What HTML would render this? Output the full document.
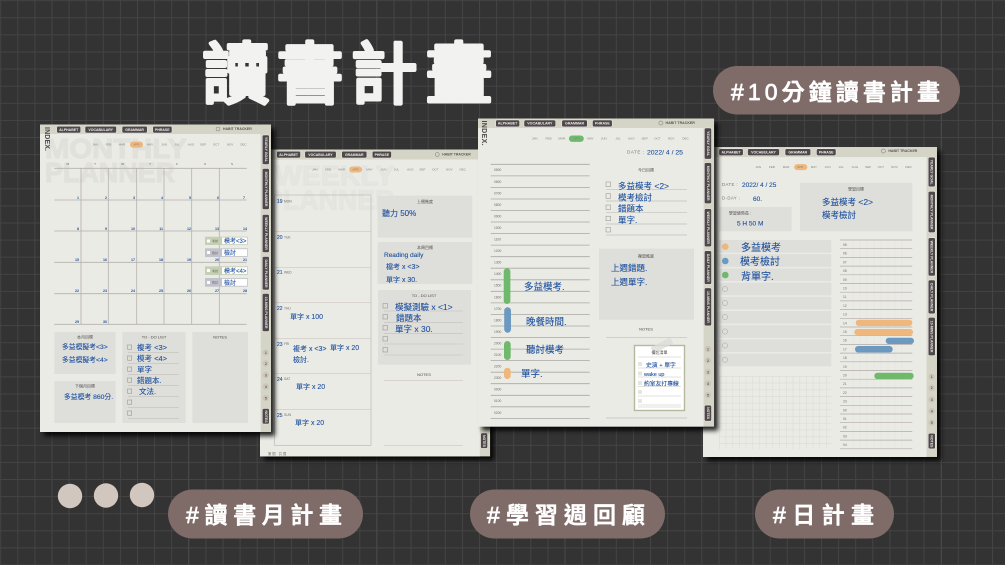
<!DOCTYPE html>
<html lang="zh-Hant"><head><meta charset="utf-8"><title>讀書計畫</title>
<style>
html,body{margin:0;padding:0;background:#333}
svg{display:block}
text{font-family:"Liberation Sans","Noto Sans CJK TC",sans-serif}
.w{fill:#f2efed;font-size:3.5px;font-weight:700;text-anchor:middle}
.m{fill:#85847f;font-size:3px;text-anchor:middle}
.h{fill:#1c4f9e;stroke:#1c4f9e;stroke-width:.1px;font-family:"Liberation Sans","Noto Sans CJK TC",sans-serif;font-size:8.5px}
.t{fill:#4e4b48;font-size:4px;text-anchor:middle}
.l{fill:#6e6c66;font-size:3.3px}
.d{fill:#1c4f9e;font-size:3.6px;font-weight:700;text-anchor:end}
.tag{fill:#fff;font-size:23px;font-weight:500;font-family:"Liberation Sans","Noto Sans CJK TC",sans-serif;stroke:#fff;stroke-width:.7px;stroke-linejoin:round}
.tt{fill:#f2f3f1;stroke:#f2f3f1;stroke-width:4px;stroke-linejoin:round;stroke-linecap:round;font-size:67px;font-weight:400;text-anchor:middle}
.g{fill:#e1e1dc;stroke:#e1e1dc;stroke-width:1.2px;font-size:28px;font-weight:700}
.tb{fill:#4e484a;stroke:#f0eeea;stroke-width:.5}
.c{fill:#ccc5bb}
</style></head><body>
<svg xmlns="http://www.w3.org/2000/svg" width="1005" height="565" viewBox="0 0 1005 565">
<defs>
<pattern id="bg" width="17.1" height="17.1" patternUnits="userSpaceOnUse" x=".2" y=".2"><path d="M.5 0V17.1M0 .5H17.1" stroke="#444" fill="none"/></pattern>
<pattern id="g4" width="6.7" height="6.7" patternUnits="userSpaceOnUse" x="719" y="376"><path d="M.25 0V6.7M0 .25H6.7" stroke="#dcdcd6" stroke-width=".6" fill="none"/></pattern>
<filter id="sh" x="-10%" y="-10%" width="125%" height="125%" color-interpolation-filters="sRGB"><feGaussianBlur in="SourceAlpha" stdDeviation="2.5" result="b"/><feOffset in="b" dx="4" dy="4" result="o"/><feComponentTransfer in="o" result="o2"><feFuncA type="linear" slope=".85"/></feComponentTransfer><feGaussianBlur in="SourceGraphic" stdDeviation=".3" result="s"/><feMerge><feMergeNode in="o2"/><feMergeNode in="s"/></feMerge></filter>
</defs>
<rect width="1005" height="565" fill="#333"/>
<rect width="1005" height="565" fill="url(#bg)"/>
<path d="M188.500 0V565M376.700 0V565M565 0V565M753 0V565M941.500 0V565" stroke="#484848"/>

<text class="tt" x="236" y="98">讀</text>
<text class="tt" x="310" y="98">書</text>
<text class="tt" x="384" y="98">計</text>
<text class="tt" x="459" y="98">畫</text>

<rect x="713" y="66" width="247" height="48.500" rx="24" fill="#7f6c69"/>
<text class="tag" x="731" y="100" textLength="209">#10分鐘讀書計畫</text>
<rect x="168" y="489.500" width="195" height="49" rx="24.500" fill="#7f6c69"/>
<text class="tag" x="186" y="523" textLength="156">#讀書月計畫</text>
<rect x="470" y="489.500" width="195" height="49" rx="24.500" fill="#7f6c69"/>
<text class="tag" x="487" y="523" textLength="158">#學習週回顧</text>
<rect x="755" y="489.500" width="139" height="49" rx="24.500" fill="#7f6c69"/>
<text class="tag" x="773" y="523" textLength="101">#日計畫</text>
<circle cx="70" cy="496" r="12.200" fill="#d2c7bf"/><circle cx="106" cy="495.500" r="12.200" fill="#d2c7bf"/><circle cx="142" cy="495" r="12.200" fill="#d2c7bf"/>

<!-- PAGE 2 -->
<g filter="url(#sh)">
<g transform="translate(260 149.500) scale(.996 .998)">
<rect width="231" height="307.500" fill="#d5d5c7"/><rect y="10" width="220.700" height="297.500" fill="#ebebe6"/>
<rect class="tb" x="16.700" y="1.700" width="24" height="6.800" rx="1.500"/><text class="w" x="28.700" y="6.300">ALPHABET</text>
<rect class="tb" x="45" y="1.700" width="31.500" height="6.800" rx="1.500"/><text class="w" x="60.700" y="6.300">VOCABULARY</text>
<rect class="tb" x="82" y="1.700" width="25.300" height="6.800" rx="1.500"/><text class="w" x="94.600" y="6.300">GRAMMAR</text>
<rect class="tb" x="112.700" y="1.700" width="19.300" height="6.800" rx="1.500"/><text class="w" x="122.300" y="6.300">PHRASE</text>
<circle cx="178" cy="5" r="2" fill="none" stroke="#777" stroke-width=".5"/><text x="183" y="6.200" font-size="3.500" font-weight="700" fill="#5a5550">HABIT TRACKER</text>
<text class="g" x="15" y="35.500" textLength="120" lengthAdjust="spacingAndGlyphs" fill-opacity=".45" stroke-opacity=".45">WEEKLY</text>
<text class="g" x="5" y="60" textLength="130" lengthAdjust="spacingAndGlyphs" fill-opacity=".45" stroke-opacity=".45">PLANNER</text>
<rect x="89.500" y="17" width="13" height="6" rx="3" fill="#efb77c"/>
<text class="m" x="55" y="21">JAN</text><text class="m" x="68.500" y="21">FEB</text><text class="m" x="82" y="21">MAR</text><text class="m" x="96" y="21">APR</text><text class="m" x="110" y="21">MAY</text><text class="m" x="124" y="21">JUN</text><text class="m" x="137" y="21">JUL</text><text class="m" x="151" y="21">AUG</text><text class="m" x="163" y="21">SEP</text><text class="m" x="176" y="21">OCT</text><text class="m" x="190" y="21">NOV</text><text class="m" x="203.500" y="21">DEC</text>
<rect class="tb" x="221.500" y="284" width="7" height="15.500" rx="1.500"/><text class="w" transform="translate(224 292) rotate(90)">NOTES</text>
</g>
<rect x="274.300" y="195" width="96.700" height="250.300" fill="none" stroke="#bdb9b3" stroke-width=".7"/>
<path d="M274 231.300H371M274 267.300H371M274 302.300H371M274 338.300H371M274 373.300H371M274 409.300H371" stroke="#cfc5c3" stroke-width=".7"/>
<text class="l" x="284" y="202.500">MON</text><text class="l" x="284" y="238.500">TUE</text><text class="l" x="284" y="273.500">WED</text><text class="l" x="284" y="309.500">THU</text><text class="l" x="284" y="345">FRI</text><text class="l" x="284" y="380">SAT</text><text class="l" x="284" y="416">SUN</text>
<text class="h" style="font-size:5px" x="277" y="203">19</text><text class="h" style="font-size:5px" x="277" y="239">20</text><text class="h" style="font-size:5px" x="277" y="274">21</text><text class="h" style="font-size:5px" x="277" y="310">22</text><text class="h" style="font-size:5px" x="277" y="346">23</text><text class="h" style="font-size:5px" x="277" y="381">24</text><text class="h" style="font-size:5px" x="277" y="417">25</text>
<text class="h" style="font-size:7px" x="290" y="319">單字 x 100</text>
<text class="h" style="font-size:7px" x="293" y="351">複考 x &lt;3&gt;</text><text class="h" style="font-size:7px" x="330" y="350">單字 x 20</text><text class="h" style="font-size:7px" x="293" y="362">檢討.</text>
<text class="h" style="font-size:7px" x="296" y="389">單字 x 20</text><text class="h" style="font-size:7px" x="295" y="425">單字 x 20</text>
<rect x="377.700" y="195.700" width="94.600" height="42" fill="#dededa"/><text class="t" x="425" y="203">上週進度</text>
<text class="h" style="font-size:8px" x="382" y="216">聽力 50%</text>
<rect x="377.700" y="242" width="94.600" height="42" fill="#dededa"/><text class="t" x="425" y="249">本周目標</text>
<text class="h" style="font-size:6.500px" x="384" y="257">Reading daily</text><text class="h" style="font-size:7px" x="386" y="269">檔考 x &lt;3&gt;</text><text class="h" style="font-size:7px" x="386" y="282">單字 x 30.</text>
<rect x="378" y="290" width="93" height="74.700" fill="#dededa"/><text class="t" x="424" y="297">TO - DO LIST</text>
<path d="M384 311H463M384 322.300H463M384 333.300H463M384 344H463M384 355H463" stroke="#c4c0ba" stroke-width=".6"/>
<g fill="none" stroke="#8d8b85" stroke-width=".5"><rect x="383" y="303.500" width="4.500" height="4.500"/><rect x="383" y="314.500" width="4.500" height="4.500"/><rect x="383" y="325.500" width="4.500" height="4.500"/><rect x="383" y="336.500" width="4.500" height="4.500"/><rect x="383" y="347.500" width="4.500" height="4.500"/></g>
<text class="h" style="font-size:8.500px" x="395" y="310">模擬測驗 x &lt;1&gt;</text><text class="h" style="font-size:8.500px" x="396" y="321">錯題本</text><text class="h" style="font-size:8.500px" x="395" y="332">單字 x 30.</text>
<text class="t" x="424" y="376">NOTES</text>
<path d="M384 380.300H463M384 445.300H463" stroke="#cfc5c3" stroke-width=".7"/>
<text class="l" x="268" y="455">第 週　共 週</text>
</g>

<!-- PAGE 4 -->
<g filter="url(#sh)">
<g transform="translate(703 147) scale(1.013 1.008)">
<rect width="231" height="307.500" fill="#d5d5c7"/><rect y="10" width="220.700" height="297.500" fill="#ebebe6"/>
<rect class="tb" x="15.700" y="1.700" width="24" height="6.800" rx="1.500"/><text class="w" x="27.700" y="6.300">ALPHABET</text>
<rect class="tb" x="44" y="1.700" width="31.500" height="6.800" rx="1.500"/><text class="w" x="59.700" y="6.300">VOCABULARY</text>
<rect class="tb" x="81" y="1.700" width="25.300" height="6.800" rx="1.500"/><text class="w" x="93.600" y="6.300">GRAMMAR</text>
<rect class="tb" x="112" y="1.700" width="19.300" height="6.800" rx="1.500"/><text class="w" x="121.600" y="6.300">PHRASE</text>
<circle cx="178" cy="4" r="2" fill="none" stroke="#777" stroke-width=".5"/><text x="183" y="5.200" font-size="3.500" font-weight="700" fill="#5a5550">HABIT TRACKER</text>
<rect x="90" y="17" width="13" height="6" rx="3" fill="#efb77c"/>
<text class="m" x="54.500" y="21">JAN</text><text class="m" x="68" y="21">FEB</text><text class="m" x="82" y="21">MAR</text><text class="m" x="96" y="21">APR</text><text class="m" x="109.500" y="21">MAY</text><text class="m" x="123" y="21">JUN</text><text class="m" x="136.500" y="21">JUL</text><text class="m" x="150" y="21">AUG</text><text class="m" x="163" y="21">SEP</text><text class="m" x="175.500" y="21">OCT</text><text class="m" x="189" y="21">NOV</text><text class="m" x="203" y="21">DEC</text>
<rect class="tb" x="222.300" y="10" width="7" height="29.500" rx="1.500"/><text class="w" transform="translate(224.800 25) rotate(90)">YEARLY GOAL</text>
<rect class="tb" x="222.300" y="44" width="7" height="41" rx="1.500"/><text class="w" transform="translate(224.800 64.500) rotate(90)">MONTHLY PLANNER</text>
<rect class="tb" x="222.300" y="90" width="7" height="38" rx="1.500"/><text class="w" transform="translate(224.800 109) rotate(90)">WEEKLY PLANNER</text>
<rect class="tb" x="222.300" y="132" width="7" height="33.500" rx="1.500"/><text class="w" transform="translate(224.800 149) rotate(90)">DAILY PLANNER</text>
<rect class="tb" x="222.300" y="169" width="7" height="38" rx="1.500"/><text class="w" transform="translate(224.800 188) rotate(90)">10-MINS PLANNER</text>
<circle class="c" cx="225.800" cy="228" r="3.200"/><circle class="c" cx="225.800" cy="239" r="3.200"/><circle class="c" cx="225.800" cy="250.500" r="3.200"/><circle class="c" cx="225.800" cy="262" r="3.200"/><circle class="c" cx="225.800" cy="273.500" r="3.200"/>
<g fill="#5d5852" font-size="3.500" font-weight="700" text-anchor="middle"><text x="225.800" y="229.300">1</text><text x="225.800" y="240.300">2</text><text x="225.800" y="251.800">3</text><text x="225.800" y="263.300">4</text><text x="225.800" y="274.800">5</text></g>
<rect class="tb" x="222.300" y="284" width="7" height="15.500" rx="1.500"/><text class="w" transform="translate(224.800 292) rotate(90)">NOTES</text>
</g>
<text x="722" y="186" font-size="4.300" fill="#77756f" letter-spacing=".4">DATE :</text><text class="h" style="font-size:6.500px" x="742" y="187">2022/ 4 / 25</text>
<text x="722" y="199.500" font-size="4.300" fill="#77756f" letter-spacing=".4">D-DAY :</text><text class="h" style="font-size:6.500px" x="753" y="201">60.</text>
<rect x="719" y="207" width="72.700" height="24.300" fill="#dededa"/><text class="t" x="740" y="214.500">學習總時長 :</text><text class="h" style="font-size:6.500px" x="737" y="225.500">5 H 50 M</text>
<rect x="800" y="182.700" width="112.300" height="48.600" fill="#dededa"/><text class="t" x="856" y="190.500">學習目標</text>
<text class="h" x="822" y="205">多益模考 &lt;2&gt;</text><text class="h" x="822" y="218">模考檢討</text>
<g fill="#dededa"><rect x="719" y="240" width="112.300" height="12.700"/><rect x="719" y="254.200" width="112.300" height="12.700"/><rect x="719" y="268.400" width="112.300" height="12.700"/><rect x="719" y="282.600" width="112.300" height="12.700"/><rect x="719" y="296.800" width="112.300" height="12.700"/><rect x="719" y="311" width="112.300" height="12.700"/><rect x="719" y="325.200" width="112.300" height="12.700"/><rect x="719" y="339.400" width="112.300" height="12.700"/><rect x="719" y="353.600" width="112.300" height="12.700"/></g>
<circle cx="725.300" cy="246.700" r="3.300" fill="#efb77c"/><circle cx="725.300" cy="261" r="3.300" fill="#6b99c0"/><circle cx="725.300" cy="275" r="3.300" fill="#6fb96c"/>
<g fill="none" stroke="#a5a49e" stroke-width=".5"><circle cx="725" cy="289" r="2.600"/><circle cx="725" cy="303" r="2.600"/><circle cx="725" cy="317" r="2.600"/><circle cx="725" cy="331.500" r="2.600"/><circle cx="725" cy="345.500" r="2.600"/><circle cx="725" cy="359.700" r="2.600"/></g>
<text class="h" style="font-size:10px" x="741" y="251">多益模考</text><text class="h" style="font-size:10px" x="740" y="265">模考檢討</text><text class="h" style="font-size:10px" x="741" y="280">背單字.</text>
<rect x="719" y="376" width="112.300" height="73" fill="url(#g4)"/>
<path d="M853 240V449M860 240V449M867 240V449M874 240V449M881 240V449M888 240V449M895 240V449M902 240V449" stroke="#e3e3de" stroke-width=".5"/>
<path d="M840 240H912.300M840 248.700H912.300M840 257.400H912.300M840 266.100H912.300M840 274.800H912.300M840 283.500H912.300M840 292.200H912.300M840 300.900H912.300M840 309.600H912.300M840 318.300H912.300M840 327H912.300M840 335.700H912.300M840 344.400H912.300M840 353.100H912.300M840 361.800H912.300M840 370.500H912.300M840 379.200H912.300M840 387.900H912.300M840 396.600H912.300M840 405.300H912.300M840 414H912.300M840 422.700H912.300M840 431.400H912.300M840 440.100H912.300M840 448.800H912.300" stroke="#b2aaa8" stroke-width=".7"/>
<text class="l" x="843" y="246">05</text><text class="l" x="843" y="254.700">06</text><text class="l" x="843" y="263.400">07</text><text class="l" x="843" y="272.100">08</text><text class="l" x="843" y="280.800">09</text><text class="l" x="843" y="289.500">10</text><text class="l" x="843" y="298.200">11</text><text class="l" x="843" y="306.900">12</text><text class="l" x="843" y="315.600">13</text><text class="l" x="843" y="324.300">14</text><text class="l" x="843" y="333">15</text><text class="l" x="843" y="341.700">16</text><text class="l" x="843" y="350.400">17</text><text class="l" x="843" y="359.100">18</text><text class="l" x="843" y="367.800">19</text><text class="l" x="843" y="376.500">20</text><text class="l" x="843" y="385.200">21</text><text class="l" x="843" y="393.900">22</text><text class="l" x="843" y="402.600">23</text><text class="l" x="843" y="411.300">00</text><text class="l" x="843" y="420">01</text><text class="l" x="843" y="428.700">02</text><text class="l" x="843" y="437.400">03</text><text class="l" x="843" y="446.100">04</text>
<rect x="855.700" y="319.700" width="56.600" height="6.300" rx="3.100" fill="#efb77c"/><rect x="854.300" y="329" width="58.700" height="6.300" rx="3.100" fill="#efb77c"/><rect x="885.700" y="337.700" width="28.300" height="6.300" rx="3.100" fill="#6b99c0"/><rect x="855" y="346" width="37.700" height="6.500" rx="3.200" fill="#6b99c0"/><rect x="874.300" y="372.700" width="39.400" height="6.500" rx="3.200" fill="#6fb96c"/>
</g>

<!-- PAGE 1 -->
<g filter="url(#sh)">
<g transform="translate(40 124.500)">
<rect width="231" height="307.500" fill="#d5d5c7"/><rect y="9.500" width="220.700" height="298" fill="#ebebe6"/>
<text class="g" x="5" y="33.500" textLength="142" lengthAdjust="spacingAndGlyphs">MONTHLY</text>
<text class="g" x="5" y="57.500" textLength="130" lengthAdjust="spacingAndGlyphs">PLANNER</text>
<rect class="tb" x="16.700" y="1.700" width="24" height="6.800" rx="1.500"/><text class="w" x="28.700" y="6.300">ALPHABET</text>
<rect class="tb" x="45" y="1.700" width="31.500" height="6.800" rx="1.500"/><text class="w" x="60.700" y="6.300">VOCABULARY</text>
<rect class="tb" x="82" y="1.700" width="25.300" height="6.800" rx="1.500"/><text class="w" x="94.600" y="6.300">GRAMMAR</text>
<rect class="tb" x="112.700" y="1.700" width="19.300" height="6.800" rx="1.500"/><text class="w" x="122.300" y="6.300">PHRASE</text>
<circle cx="178" cy="4.500" r="2" fill="none" stroke="#777" stroke-width=".5"/><text x="183" y="5.700" font-size="3.500" font-weight="700" fill="#5a5550">HABIT TRACKER</text>
<text transform="translate(5 2.500) rotate(90)" font-size="7" font-weight="700" fill="#4e4a47" textLength="24">INDEX.</text>
<rect x="90" y="17" width="13" height="6.300" rx="3" fill="#efb77c"/>
<text class="m" x="55" y="21">JAN</text><text class="m" x="68.500" y="21">FEB</text><text class="m" x="82" y="21">MAR</text><text class="m" x="96.500" y="21">APR</text><text class="m" x="110" y="21">MAY</text><text class="m" x="124" y="21">JUN</text><text class="m" x="137" y="21">JUL</text><text class="m" x="151" y="21">AUG</text><text class="m" x="163" y="21">SEP</text><text class="m" x="176" y="21">OCT</text><text class="m" x="190" y="21">NOV</text><text class="m" x="203.500" y="21">DEC</text>
<rect class="tb" x="222.300" y="10.500" width="7" height="29.500" rx="1.500"/><text class="w" transform="translate(224.800 25) rotate(90)">YEARLY GOAL</text>
<rect class="tb" x="222.300" y="44" width="7" height="41" rx="1.500"/><text class="w" transform="translate(224.800 64.500) rotate(90)">MONTHLY PLANNER</text>
<rect class="tb" x="222.300" y="90" width="7" height="38" rx="1.500"/><text class="w" transform="translate(224.800 109) rotate(90)">WEEKLY PLANNER</text>
<rect class="tb" x="222.300" y="132" width="7" height="33.500" rx="1.500"/><text class="w" transform="translate(224.800 149) rotate(90)">DAILY PLANNER</text>
<rect class="tb" x="222.300" y="169" width="7" height="38" rx="1.500"/><text class="w" transform="translate(224.800 188) rotate(90)">10-MINS PLANNER</text>
<circle class="c" cx="225.800" cy="228" r="3.200"/><circle class="c" cx="225.800" cy="239" r="3.200"/><circle class="c" cx="225.800" cy="250.500" r="3.200"/><circle class="c" cx="225.800" cy="262" r="3.200"/><circle class="c" cx="225.800" cy="273.500" r="3.200"/>
<g fill="#5d5852" font-size="3.500" font-weight="700" text-anchor="middle"><text x="225.800" y="229.300">1</text><text x="225.800" y="240.300">2</text><text x="225.800" y="251.800">3</text><text x="225.800" y="263.300">4</text><text x="225.800" y="274.800">5</text></g>
<rect class="tb" x="222.300" y="284" width="7" height="15.500" rx="1.500"/><text class="w" transform="translate(224.800 292) rotate(90)">NOTES</text>
</g>
<g fill="#66635e" font-size="3" text-anchor="middle"><text x="67.700" y="165">M</text><text x="95" y="165">T</text><text x="122.700" y="165">W</text><text x="150" y="165">T</text><text x="177" y="165">F</text><text x="205" y="165">S</text><text x="232" y="165">S</text></g>
<path d="M54.300 168.300H246.700M54.300 200H246.700M54.300 231H246.700M54.300 262.300H246.700M54.300 293.700H246.700M54.300 324.300H246.700M81 168V324M108.300 168V324M136.700 168V324M164 168V324M191.700 168V324M219.300 168V324" stroke="#b5afab" stroke-width=".8" fill="none"/>
<text class="d" x="79" y="199">1</text><text class="d" x="107" y="199">2</text><text class="d" x="135" y="199">3</text><text class="d" x="163" y="199">4</text><text class="d" x="191" y="199">5</text><text class="d" x="219" y="199">6</text><text class="d" x="245" y="199">7</text>
<text class="d" x="79" y="230">8</text><text class="d" x="107" y="230">9</text><text class="d" x="135" y="230">10</text><text class="d" x="163" y="230">11</text><text class="d" x="191" y="230">12</text><text class="d" x="219" y="230">13</text><text class="d" x="247" y="230">14</text>
<text class="d" x="79" y="261">15</text><text class="d" x="107" y="261">16</text><text class="d" x="135" y="261">17</text><text class="d" x="163" y="261">18</text><text class="d" x="191" y="261">19</text><text class="d" x="219" y="261">20</text><text class="d" x="247" y="261">21</text>
<text class="d" x="79" y="292">22</text><text class="d" x="107" y="292">23</text><text class="d" x="135" y="292">24</text><text class="d" x="163" y="292">25</text><text class="d" x="191" y="292">26</text><text class="d" x="219" y="292">27</text><text class="d" x="247" y="292">28</text>
<text class="d" x="79" y="323">29</text><text class="d" x="107" y="323">30</text>
<rect x="205" y="236.700" width="42.700" height="8.300" fill="#c5cfb4"/><rect x="222" y="237.500" width="25" height="6.700" fill="#fff"/>
<rect x="205" y="248.300" width="42.700" height="8.700" fill="#c1c2cb"/><rect x="222" y="249.200" width="25" height="6.900" fill="#fff"/>
<rect x="205" y="266.300" width="42.700" height="8.700" fill="#c5cfb4"/><rect x="222" y="267.200" width="25" height="6.900" fill="#fff"/>
<rect x="205" y="278" width="42.700" height="8.700" fill="#c1c2cb"/><rect x="222" y="278.900" width="25" height="6.900" fill="#fff"/>
<g fill="#fff"><rect x="207" y="239.500" width="3" height="3"/><rect x="207" y="251" width="3" height="3"/><rect x="207" y="269" width="3" height="3"/><rect x="207" y="281" width="3" height="3"/></g>
<g fill="#6a6a62" font-size="3"><text x="212" y="242">考試</text><text x="212" y="253.800">檢討</text><text x="212" y="271.800">考試</text><text x="212" y="283.700">檢討</text></g>
<text class="h" style="font-size:6px" x="224" y="243">模考&lt;3&gt;</text><text class="h" style="font-size:6px" x="224" y="255">檢討</text><text class="h" style="font-size:6px" x="224" y="273">模考&lt;4&gt;</text><text class="h" style="font-size:6px" x="224" y="285">檢討</text>
<rect x="54.300" y="332" width="61.400" height="42" fill="#dededa"/><text class="t" x="85" y="338.500">本月目標</text>
<text class="h" style="font-size:6.800px" x="62" y="349">多益模擬考&lt;3&gt;</text><text class="h" style="font-size:6.800px" x="62" y="362">多益模擬考&lt;4&gt;</text>
<rect x="54.300" y="381" width="61.400" height="42" fill="#dededa"/><text class="t" x="85" y="387.500">下個月目標</text>
<text class="h" style="font-size:6.800px" x="64" y="399">多益模考 860分.</text>
<rect x="122.300" y="332" width="63.400" height="91" fill="#dededa"/><text class="t" x="154" y="338.500">TO - DO LIST</text>
<path d="M128 352.300H179M128 363.300H179M128 374.300H179M128 385.300H179M128 396.300H179M128 407.300H179M128 418.300H179" stroke="#c4c0ba" stroke-width=".6"/>
<g fill="none" stroke="#8d8b85" stroke-width=".5"><rect x="127.500" y="345" width="4.200" height="4.200"/><rect x="127.500" y="356" width="4.200" height="4.200"/><rect x="127.500" y="367" width="4.200" height="4.200"/><rect x="127.500" y="378" width="4.200" height="4.200"/><rect x="127.500" y="389" width="4.200" height="4.200"/><rect x="127.500" y="400" width="4.200" height="4.200"/><rect x="127.500" y="411" width="4.200" height="4.200"/></g>
<text class="h" style="font-size:7.500px" x="137" y="350">複考 &lt;3&gt;</text><text class="h" style="font-size:7.500px" x="137" y="361">模考 &lt;4&gt;</text><text class="h" style="font-size:7.500px" x="137" y="372">單字</text><text class="h" style="font-size:7.500px" x="137" y="383">錯題本.</text><text class="h" style="font-size:7.500px" x="139" y="394">文法.</text>
<rect x="192.300" y="332" width="55.700" height="91" fill="#dededa"/><text class="t" x="220" y="338.500">NOTES</text>
</g>

<!-- PAGE 3 -->
<g filter="url(#sh)">
<g transform="translate(478 118.500) scale(1.022 1.002)">
<rect width="231" height="307.500" fill="#d5d5c7"/><rect y="9.500" width="220.700" height="298" fill="#ebebe6"/>
<rect class="tb" x="17.300" y="1.500" width="23.400" height="6.800" rx="1.500"/><text class="w" x="29" y="6.100">ALPHABET</text>
<rect class="tb" x="45" y="1.500" width="31" height="6.800" rx="1.500"/><text class="w" x="60.500" y="6.100">VOCABULARY</text>
<rect class="tb" x="82" y="1.500" width="25" height="6.800" rx="1.500"/><text class="w" x="94.500" y="6.100">GRAMMAR</text>
<rect class="tb" x="112" y="1.500" width="19.300" height="6.800" rx="1.500"/><text class="w" x="121.700" y="6.100">PHRASE</text>
<circle cx="179" cy="4.500" r="2" fill="none" stroke="#777" stroke-width=".5"/><text x="183.500" y="5.700" font-size="3.500" font-weight="700" fill="#5a5550">HABIT TRACKER</text>
<text transform="translate(4 2) rotate(90)" font-size="7" font-weight="700" fill="#4e4a47" textLength="25">INDEX.</text>
<rect x="89" y="17" width="14.500" height="6.300" rx="3" fill="#6fb96c"/>
<text class="m" x="55.500" y="21">JAN</text><text class="m" x="69" y="21">FEB</text><text class="m" x="82" y="21">MAR</text><text class="m" x="96.300" y="21">APR</text><text class="m" x="110" y="21">MAY</text><text class="m" x="123" y="21">JUN</text><text class="m" x="137" y="21">JUL</text><text class="m" x="150" y="21">AUG</text><text class="m" x="163" y="21">SEP</text><text class="m" x="175.500" y="21">OCT</text><text class="m" x="189" y="21">NOV</text><text class="m" x="203" y="21">DEC</text>
<rect class="tb" x="221.500" y="9.500" width="7" height="31" rx="1.500"/><text class="w" transform="translate(224 25) rotate(90)">YEARLY GOAL</text>
<rect class="tb" x="221.500" y="44" width="7" height="41" rx="1.500"/><text class="w" transform="translate(224 64.500) rotate(90)">MONTHLY PLANNER</text>
<rect class="tb" x="221.500" y="90" width="7" height="38" rx="1.500"/><text class="w" transform="translate(224 109) rotate(90)">WEEKLY PLANNER</text>
<rect class="tb" x="221.500" y="132" width="7" height="33.500" rx="1.500"/><text class="w" transform="translate(224 149) rotate(90)">DAILY PLANNER</text>
<rect class="tb" x="221.500" y="169" width="7" height="38" rx="1.500"/><text class="w" transform="translate(224 188) rotate(90)">10-MINS PLANNER</text>
<circle class="c" cx="225" cy="230" r="3.200"/><circle class="c" cx="225" cy="241.500" r="3.200"/><circle class="c" cx="225" cy="253" r="3.200"/><circle class="c" cx="225" cy="264.500" r="3.200"/><circle class="c" cx="225" cy="276" r="3.200"/>
<g fill="#5d5852" font-size="3.500" font-weight="700" text-anchor="middle"><text x="225" y="231.300">1</text><text x="225" y="242.800">2</text><text x="225" y="254.300">3</text><text x="225" y="265.800">4</text><text x="225" y="277.300">5</text></g>
<rect class="tb" x="221.500" y="286" width="7" height="16" rx="1.500"/><text class="w" transform="translate(224 294) rotate(90)">NOTES</text>
</g>
<text x="627" y="153.500" font-size="4.600" fill="#77756f" letter-spacing=".5">DATE :</text><text class="h" style="font-size:6.800px" x="647" y="154.500">2022/ 4 / 25</text>
<path d="M490.700 164.300H589.700M490.700 175.900H589.700M490.700 187.400H589.700M490.700 199H589.700M490.700 210.500H589.700M490.700 222H589.700M490.700 233.600H589.700M490.700 245.100H589.700M490.700 256.700H589.700M490.700 268.200H589.700M490.700 279.800H589.700M490.700 291.300H589.700M490.700 302.900H589.700M490.700 314.400H589.700M490.700 326H589.700M490.700 337.500H589.700M490.700 349.100H589.700M490.700 360.600H589.700M490.700 372.200H589.700M490.700 383.700H589.700M490.700 395.300H589.700M490.700 406.800H589.700M490.700 418.400H589.700" stroke="#a9a8a3" stroke-width=".8"/>
<text class="l" x="494" y="171.200">0500</text><text class="l" x="494" y="182.800">0600</text><text class="l" x="494" y="194.300">0700</text><text class="l" x="494" y="205.900">0800</text><text class="l" x="494" y="217.400">0900</text><text class="l" x="494" y="229">1000</text><text class="l" x="494" y="240.500">1100</text><text class="l" x="494" y="252.100">1200</text><text class="l" x="494" y="263.600">1300</text><text class="l" x="494" y="275.200">1400</text><text class="l" x="494" y="286.700">1500</text><text class="l" x="494" y="298.300">1600</text><text class="l" x="494" y="309.800">1700</text><text class="l" x="494" y="321.400">1800</text><text class="l" x="494" y="332.900">1900</text><text class="l" x="494" y="344.500">2000</text><text class="l" x="494" y="356">2100</text><text class="l" x="494" y="367.600">2200</text><text class="l" x="494" y="379.100">2300</text><text class="l" x="494" y="390.700">0000</text><text class="l" x="494" y="402.200">0100</text><text class="l" x="494" y="413.800">0200</text>
<rect x="503.700" y="268.300" width="6.700" height="35.700" rx="3.300" fill="#6fb96c"/><rect x="504.200" y="307.300" width="6.800" height="25.400" rx="3.400" fill="#6b99c0"/><rect x="504" y="341" width="6.700" height="19" rx="3.300" fill="#6fb96c"/><rect x="504" y="367.700" width="6.700" height="11.300" rx="3.300" fill="#efb77c"/>
<text class="h" style="font-size:9.500px" x="524" y="290">多益模考.</text><text class="h" style="font-size:9.500px" x="526" y="325">晚餐時間.</text><text class="h" style="font-size:9.500px" x="526" y="353">聽討模考</text><text class="h" style="font-size:9.500px" x="521" y="377">單字.</text>
<text class="t" x="646" y="171.500">今日目標</text>
<path d="M606 189.300H687M606 201H687M606 212.300H687M606 224H687M606 235H687" stroke="#c4c0ba" stroke-width=".7"/>
<g fill="none" stroke="#8d8b85" stroke-width=".5"><rect x="606" y="182" width="4.500" height="4.500"/><rect x="606" y="193.700" width="4.500" height="4.500"/><rect x="606" y="205" width="4.500" height="4.500"/><rect x="606" y="216.200" width="4.500" height="4.500"/><rect x="606" y="227.500" width="4.500" height="4.500"/></g>
<text class="h" style="font-size:8.500px" x="618" y="189">多益模考 &lt;2&gt;</text><text class="h" style="font-size:8.500px" x="618" y="200.500">模考檢討</text><text class="h" style="font-size:8.500px" x="618" y="211.500">錯題本</text><text class="h" style="font-size:8.500px" x="618" y="223">單字.</text>
<rect x="599" y="248.700" width="95" height="71" fill="#dededa"/><text class="t" x="646" y="257.500">複習進度</text>
<text class="h" style="font-size:8.500px" x="611" y="271">上週錯題.</text><text class="h" style="font-size:8.500px" x="611" y="285">上週單字.</text>
<text class="t" x="646" y="330.500">NOTES</text>
<path d="M606 337.300H687M606 418H687" stroke="#c4c0ba" stroke-width=".7"/>
<rect x="634.500" y="345.500" width="50" height="65" fill="#fff" stroke="#b5b89d" stroke-width="1.400"/>
<rect x="651" y="342" width="22" height="7" transform="rotate(-28 662 345.500)" fill="#dcdcd8" fill-opacity=".8"/>
<text class="t" x="659.500" y="354">備忘清單</text>
<path d="M638 357H681M638 368H681M638 377H681M638 386.500H681M638 396H681M638 405H681M638 407H681" stroke="#d8d8d2" stroke-width=".7"/>
<g fill="#e6e6e1"><rect x="638" y="362" width="4" height="4"/><rect x="638" y="371.500" width="4" height="4"/><rect x="638" y="381" width="4" height="4"/><rect x="638" y="390" width="4" height="4"/><rect x="638" y="399" width="4" height="4"/></g>
<text class="h" style="font-size:5.800px" x="646" y="367">史演 + 單字</text><text class="h" style="font-size:5.500px" x="644" y="376">wake up</text><text class="h" style="font-size:5.800px" x="644" y="385.500">約室友打專線</text>
</g>
</svg>
</body></html>
